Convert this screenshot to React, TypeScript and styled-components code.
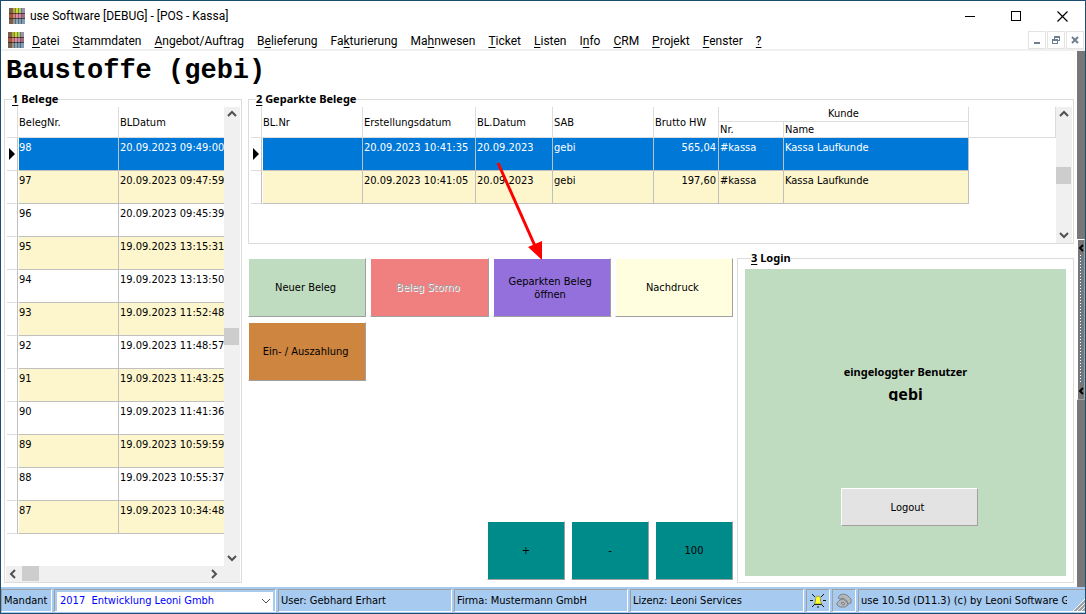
import React from 'react';
import styled, { createGlobalStyle, css } from 'styled-components';

const ui = '"DejaVu Sans Condensed", Tahoma, sans-serif';
const uiBold = '"Noto Sans", Tahoma, sans-serif';
const chrome = 'Roboto, "Segoe UI", sans-serif';
const line = '#dcdcdc';
const gridLine = '#c0c0c0';
const bevel = '#a0a0a0';

const GlobalStyle = createGlobalStyle`
  *, *::before, *::after { box-sizing: border-box; }
  body { margin: 0; background: #fff; color: #000; font: 11px/14px ${ui}; }
  button, select { font: inherit; color: inherit; margin: 0; }
`;

const Window = styled.div`
  position: relative;
  display: flex;
  flex-direction: column;
  min-height: 100vh;
  border: 1px solid #1d4e70;
  background: #fff;
`;

const TitleBar = styled.header`
  display: flex;
  align-items: center;
  height: 30px;
  padding-left: 8px;
  font: 12px/16px ${chrome};
`;

const Title = styled.h1`
  flex: 1;
  margin: 0 0 0 5px;
  font: inherit;
`;

const CaptionButton = styled.button`
  display: grid;
  place-items: center;
  width: 46px;
  height: 30px;
  padding: 0;
  border: 0;
  background: none;
`;

const MenuBar = styled.nav`
  display: flex;
  align-items: center;
  height: 20px;
  padding: 0 1px 0 7px;
  border-bottom: 2px solid #f0f0f0;
  font: 12px/16px ${chrome};
`;

const MenuList = styled.ul`
  display: flex;
  flex: 1;
  gap: 13px;
  margin: 0 0 0 8px;
  padding: 2px 0 0;
  list-style: none;
`;

const MenuLink = styled.a`
  color: inherit;
  text-decoration: none;
`;

const Key = styled.u`
  text-underline-offset: 2px;
`;

const MdiButtons = styled.div`
  display: flex;
  gap: 1px;
`;

const MdiButton = styled.button`
  display: grid;
  place-items: center;
  width: 18px;
  height: 18px;
  padding: 0;
  border: 1px solid #e3e3e3;
  background: #fff;
`;

const Main = styled.main`
  display: flex;
  flex: 1;
`;

const Workspace = styled.div`
  display: flex;
  flex: 1;
  flex-direction: column;
  min-width: 0;
  padding: 0 3px 4px;
`;

const Heading = styled.h2`
  margin: 0;
  height: 41px;
  padding-left: 2px;
  font: bold 27px/40px "Liberation Mono", "Courier New", monospace;
`;

const Columns = styled.div`
  display: grid;
  grid-template-columns: 238px minmax(0, 1fr);
  flex: 1;
  gap: 6px;
`;

const RightColumn = styled.div`
  display: flex;
  flex-direction: column;
  gap: 7px;
  min-width: 0;
`;

const Group = styled.fieldset<{ $pad: string }>`
  display: flex;
  min-width: 0;
  margin: 0;
  padding: ${(p) => p.$pad};
  border: 1px solid ${line};
`;

const Receipts = styled(Group)`
  flex-direction: column;
`;

const Login = styled(Group)`
  width: 337px;
`;

const Legend = styled.legend`
  margin-left: 6px;
  padding: 0;
  font: bold 11px/14px ${uiBold};
`;

const GridArea = styled.div<{ $height?: number }>`
  display: flex;
  flex: 1;
  min-width: 0;
  ${(p) => p.$height && css`height: ${p.$height}px;`}
`;

const GridView = styled.div`
  flex: 1;
  min-width: 0;
  padding-left: 1px;
  overflow: hidden;
`;

const Table = styled.table<{ $width: string }>`
  width: ${(p) => p.$width};
  table-layout: fixed;
  border-collapse: separate;
  border-spacing: 0;
  white-space: nowrap;
`;

const HeadCell = styled.th<{ $height?: number; $center?: boolean }>`
  height: ${(p) => p.$height ?? 31}px;
  padding: ${(p) => (p.$height ? 0 : 2)}px 1px 0;
  border-right: 1px solid ${line};
  border-bottom: 1px solid ${line};
  font-weight: normal;
  text-align: ${(p) => (p.$center ? 'center' : 'left')};
`;

const Row = styled.tr<{ $tone: 'selected' | 'odd' | 'even' }>`
  --fill: ${(p) => ({ selected: '#0078d7', odd: '#fdf5cc', even: '#fff' })[p.$tone]};
  color: ${(p) => (p.$tone === 'selected' ? '#fff' : '#000')};
`;

const Cell = styled.td<{ $right?: boolean }>`
  height: 33px;
  padding: 3px 2px 0 1px;
  border-right: 1px solid ${gridLine};
  border-bottom: 1px solid ${gridLine};
  background: var(--fill);
  text-align: ${(p) => (p.$right ? 'right' : 'left')};
  vertical-align: top;
`;

const KeyCell = styled(Cell)`
  padding-left: 0;
  border-left: 1px solid #fff;
`;

const MarkCell = styled.td`
  height: 33px;
  padding: 0 0 0 2px;
  border-right: 1px solid ${gridLine};
  border-bottom: 1px solid ${line};
`;

const MarkIcon = styled.svg`
  display: block;
`;

const Bar = styled.div<{ $dir: 'row' | 'column' }>`
  display: flex;
  flex: none;
  flex-direction: ${(p) => p.$dir};
  background: #f0f0f0;
  ${(p) => (p.$dir === 'row' ? css`height: 16px; padding-right: 18px;` : css`width: 16px;`)}
`;

const BarButton = styled.button`
  display: grid;
  place-items: center;
  width: 16px;
  height: 16px;
  padding: 0;
  border: 0;
  background: none;
`;

const Track = styled.div<{ $dir: 'row' | 'column' }>`
  display: flex;
  flex: 1;
  flex-direction: ${(p) => p.$dir};
  justify-content: ${(p) => (p.$dir === 'row' ? 'flex-start' : 'center')};
`;

const Thumb = styled.div<{ $dir: 'row' | 'column' }>`
  width: ${(p) => (p.$dir === 'row' ? 17 : 15)}px;
  height: ${(p) => (p.$dir === 'row' ? 15 : 17)}px;
  background: #cdcdcd;
`;

const Lower = styled.div`
  display: flex;
  flex: 1;
  gap: 4px;
`;

const Pad = styled.div`
  display: flex;
  flex: 1;
  flex-direction: column;
  justify-content: space-between;
  padding: 7px 0 3px;
`;

const Actions = styled.div`
  display: grid;
  grid-template-columns: repeat(4, 1fr);
  gap: 5px 4px;
`;

const Amounts = styled.div`
  display: flex;
  justify-content: flex-end;
  gap: 6px;
`;

const Tile = styled.button<{ $color: string }>`
  height: 59px;
  padding: 0 12px 0 9px;
  border: 1px solid;
  border-color: #fff ${bevel} ${bevel} #fff;
  background: ${(p) => p.$color};
  line-height: 13px;
  &:disabled { color: ${bevel}; text-shadow: 1px 1px #fff; }
`;

const AmountTile = styled(Tile)`
  width: 78px;
  padding: 0;
`;

const LoginCard = styled.div`
  display: flex;
  flex: 1;
  flex-direction: column;
  align-items: center;
  padding: 96px 0 50px;
  background: #c0dcc0;
`;

const LoginLabel = styled.p`
  margin: 0 0 6px;
  font: bold 11px/14px ${uiBold};
`;

const LoginUser = styled.p`
  margin: 0;
  height: 16px;
  overflow: hidden;
  font: bold 16px/18px ${uiBold};
`;

const LogoutButton = styled.button`
  width: 137px;
  height: 38px;
  margin: auto 0 0 8px;
  padding: 2px 4px 0 0;
  border: 1px solid;
  border-color: #fff ${bevel} ${bevel} #fff;
  background: #e3e3e3;
`;

const SideStrip = styled.aside`
  display: flex;
  flex: none;
  flex-direction: column;
  width: 8px;
  padding-top: 188px;
  background: #777;
`;

const Splitter = styled.button`
  display: flex;
  flex-direction: column;
  align-items: center;
  gap: 3px;
  height: 161px;
  padding: 4px 0;
  border: 1px solid;
  border-color: #fff ${bevel} ${bevel} #fff;
  background: #777;
`;

const Dots = styled.span`
  flex: 1;
  width: 3px;
  background:
    repeating-linear-gradient(#fff 0 1px, transparent 1px 3px) 0 0 / 1px 100% no-repeat,
    repeating-linear-gradient(transparent 0 1px, #2a78c8 1px 2px, transparent 2px 3px) 1px 0 / 1px 100% no-repeat;
`;

const StatusBar = styled.footer`
  display: grid;
  grid-template-columns: 51px 222px repeat(3, minmax(0, 174fr)) 24px 24px minmax(0, 227fr);
  gap: 2px;
  height: 26px;
  padding: 2px 0 1px;
  background: #a6caf0;
`;

const Status = styled.div`
  display: flex;
  align-items: center;
  min-width: 0;
  padding: 1px 0 0 2px;
  border: 1px solid;
  border-color: ${bevel} #fff #fff ${bevel};
  overflow: hidden;
  white-space: nowrap;
`;

const IconStatus = styled(Status)`
  justify-content: center;
  padding: 0;
`;

const VersionStatus = styled(Status)`
  position: relative;
  padding-right: 18px;
  border-right: 0;
`;

const Clip = styled.span`
  overflow: hidden;
`;

const Grip = styled.svg`
  position: absolute;
  right: 0;
  bottom: 0;
`;

const SelectFrame = styled.div`
  display: flex;
  align-items: center;
  width: 216px;
  height: 19px;
  padding-right: 2px;
  background: #fff;
`;

const ClientSelect = styled.select`
  flex: 1;
  height: 19px;
  padding: 0 3px;
  border: 0;
  appearance: none;
  background: transparent;
  color: #0000ff;
`;

const Pointer = styled.svg`
  position: absolute;
  top: 155px;
  left: 489px;
  pointer-events: none;
`;

const Logo = () => (
  <svg width="16" height="16" viewBox="0 0 16 16" shapeRendering="crispEdges" aria-hidden="true">
    <path fill="#7a6048" d="M0 0h3v16H0z" />
    <path fill="#b5a84a" d="M3 0h3v5H3z" />
    <path fill="#c9dc2c" d="M6 0h4v5H6z" />
    <path fill="#9ccf78" d="M10 0h3v5h-3z" />
    <path fill="#9d8fb0" d="M13 0h3v5h-3z" />
    <path fill="#a8553c" d="M0 5h3v5H0z" />
    <path fill="#d98068" d="M3 5h3v5H3z" />
    <path fill="#e08fa0" d="M6 5h4v5H6z" />
    <path fill="#d285b4" d="M10 5h3v5h-3z" />
    <path fill="#a07078" d="M13 5h3v5h-3z" />
    <path fill="#9c9488" d="M3 10h3v6H3z" />
    <path fill="#86a8b4" d="M6 10h4v6H6z" />
    <path fill="#7f9db8" d="M10 10h6v6h-6z" />
    <path stroke="#2a2020" strokeOpacity=".45" d="M3.500 0v16M6.500 0v16M9.500 0v16M12.500 0v16" />
    <path stroke="#2a2020" strokeOpacity=".7" d="M0 5.500h16M0 10.500h16" />
  </svg>
);

const arrows = {
  up: 'M1 6l4-4 4 4',
  down: 'M1 3l4 4 4-4',
  left: 'M6 1L2 5l4 4',
  right: 'M3 1l4 4-4 4',
};

const Chevron = ({ to, weight = 2 }: { to: keyof typeof arrows; weight?: number }) => (
  <svg width="10" height="10" viewBox="0 0 10 10" fill="none" stroke="#505050" strokeWidth={weight} aria-hidden="true">
    <path d={arrows[to]} />
  </svg>
);

const ScrollBar = ({ dir }: { dir: 'row' | 'column' }) => (
  <Bar $dir={dir}>
    <BarButton aria-label="Zurück"><Chevron to={dir === 'row' ? 'left' : 'up'} /></BarButton>
    <Track $dir={dir}><Thumb $dir={dir} /></Track>
    <BarButton aria-label="Weiter"><Chevron to={dir === 'row' ? 'right' : 'down'} /></BarButton>
  </Bar>
);

const Marker = () => (
  <MarkIcon width="6" height="12" viewBox="0 0 6 12" aria-hidden="true">
    <path d="M0 0l6 6-6 6z" />
  </MarkIcon>
);

const Mnemonic = ({ text }: { text: string }) => {
  const [before, key, after] = text.split('_');
  return <>{before}<Key>{key}</Key>{after}</>;
};

const menu = [
  '_D_atei', '_S_tammdaten', '_A_ngebot/Auftrag', 'B_e_lieferung', 'Fa_k_turierung', 'Ma_h_nwesen',
  '_T_icket', '_L_isten', 'I_n_fo', '_C_RM', '_P_rojekt', '_F_enster', '_?_',
];

const receipts = [
  ['98', '20.09.2023 09:49:00'],
  ['97', '20.09.2023 09:47:59'],
  ['96', '20.09.2023 09:45:39'],
  ['95', '19.09.2023 13:15:31'],
  ['94', '19.09.2023 13:13:50'],
  ['93', '19.09.2023 11:52:48'],
  ['92', '19.09.2023 11:48:57'],
  ['91', '19.09.2023 11:43:25'],
  ['90', '19.09.2023 11:41:36'],
  ['89', '19.09.2023 10:59:59'],
  ['88', '19.09.2023 10:55:37'],
  ['87', '19.09.2023 10:34:48'],
];

const parked = [
  ['20.09.2023 10:41:35', '20.09.2023', 'gebi', '565,04', '#kassa', 'Kassa Laufkunde'],
  ['20.09.2023 10:41:05', '20.09.2023', 'gebi', '197,60', '#kassa', 'Kassa Laufkunde'],
];

const tone = (i: number) => (i === 0 ? 'selected' : i % 2 ? 'odd' : 'even');

export default function App() {
  return (
    <Window>
      <GlobalStyle />
      <TitleBar>
        <Logo />
        <Title>use Software [DEBUG] - [POS - Kassa]</Title>
        <CaptionButton aria-label="Minimieren">
          <svg width="11" height="11" shapeRendering="crispEdges"><path stroke="#000" d="M0 5.500h10" /></svg>
        </CaptionButton>
        <CaptionButton aria-label="Maximieren">
          <svg width="11" height="11" shapeRendering="crispEdges"><path fill="none" stroke="#000" d="M.5.500h9v9h-9z" /></svg>
        </CaptionButton>
        <CaptionButton aria-label="Schließen">
          <svg width="11" height="11"><path stroke="#000" strokeWidth="1.200" d="M.5.500l10 10M10.500.500l-10 10" /></svg>
        </CaptionButton>
      </TitleBar>

      <MenuBar>
        <Logo />
        <MenuList>
          {menu.map((m) => (
            <li key={m}><MenuLink href="#"><Mnemonic text={m} /></MenuLink></li>
          ))}
        </MenuList>
        <MdiButtons>
          <MdiButton aria-label="Fenster minimieren">
            <svg width="8" height="8"><path fill="#6f7f90" d="M1 6h6v2H1z" /></svg>
          </MdiButton>
          <MdiButton aria-label="Fenster wiederherstellen">
            <svg width="8" height="8" fill="#6f7f90" shapeRendering="crispEdges">
              <path d="M2 0h6v5H6V4h1V2H3v1H2zM0 3h6v5H0zM1 5v2h4V5z" fillRule="evenodd" />
            </svg>
          </MdiButton>
          <MdiButton aria-label="Fenster schließen">
            <svg width="8" height="8"><path stroke="#6f7f90" strokeWidth="2" d="M1 1l6 6M7 1L1 7" /></svg>
          </MdiButton>
        </MdiButtons>
      </MenuBar>

      <Main>
        <Workspace>
          <Heading>Baustoffe (gebi)</Heading>
          <Columns>
            <Receipts $pad="1px 1px 0">
              <Legend><Key>1</Key> Belege</Legend>
              <GridArea>
                <GridView>
                  <Table $width="226px">
                    <colgroup><col width="11" /><col width="101" /><col /></colgroup>
                    <thead>
                      <tr>
                        <HeadCell />
                        <HeadCell>BelegNr.</HeadCell>
                        <HeadCell>BLDatum</HeadCell>
                      </tr>
                    </thead>
                    <tbody>
                      {receipts.map(([nr, date], i) => (
                        <Row key={nr} $tone={tone(i)}>
                          <MarkCell>{i === 0 && <Marker />}</MarkCell>
                          <KeyCell>{nr}</KeyCell>
                          <Cell>{date}</Cell>
                        </Row>
                      ))}
                    </tbody>
                  </Table>
                </GridView>
                <ScrollBar dir="column" />
              </GridArea>
              <ScrollBar dir="row" />
            </Receipts>

            <RightColumn>
              <Group $pad="1px 1px 0">
                <Legend><Key>2</Key> Geparkte Belege</Legend>
                <GridArea $height={136}>
                  <GridView>
                    <Table $width="100%">
                      <colgroup>
                        <col width="11" /><col width="101" /><col width="113" /><col width="77" />
                        <col width="101" /><col width="65" /><col width="65" /><col width="185" /><col />
                      </colgroup>
                      <thead>
                        <tr>
                          <HeadCell rowSpan={2} />
                          <HeadCell rowSpan={2}>BL.Nr</HeadCell>
                          <HeadCell rowSpan={2}>Erstellungsdatum</HeadCell>
                          <HeadCell rowSpan={2}>BL.Datum</HeadCell>
                          <HeadCell rowSpan={2}>SAB</HeadCell>
                          <HeadCell rowSpan={2}>Brutto HW</HeadCell>
                          <HeadCell colSpan={2} $height={15} $center>Kunde</HeadCell>
                          <HeadCell rowSpan={2} />
                        </tr>
                        <tr>
                          <HeadCell $height={16}>Nr.</HeadCell>
                          <HeadCell $height={16}>Name</HeadCell>
                        </tr>
                      </thead>
                      <tbody>
                        {parked.map(([created, date, sab, gross, nr, name], i) => (
                          <Row key={created} $tone={tone(i)}>
                            <MarkCell>{i === 0 && <Marker />}</MarkCell>
                            <KeyCell />
                            <Cell>{created}</Cell>
                            <Cell>{date}</Cell>
                            <Cell>{sab}</Cell>
                            <Cell $right>{gross}</Cell>
                            <Cell>{nr}</Cell>
                            <Cell>{name}</Cell>
                          </Row>
                        ))}
                      </tbody>
                    </Table>
                  </GridView>
                  <ScrollBar dir="column" />
                </GridArea>
              </Group>

              <Lower>
                <Pad>
                  <Actions>
                    <Tile $color="#c0dcc0">Neuer Beleg</Tile>
                    <Tile $color="#f08080" disabled>Beleg Storno</Tile>
                    <Tile $color="#9370db">Geparkten Beleg öffnen</Tile>
                    <Tile $color="#ffffe0">Nachdruck</Tile>
                    <Tile $color="#cd853f">Ein- / Auszahlung</Tile>
                  </Actions>
                  <Amounts>
                    <AmountTile $color="#008b8b">+</AmountTile>
                    <AmountTile $color="#008b8b">-</AmountTile>
                    <AmountTile $color="#008b8b">100</AmountTile>
                  </Amounts>
                </Pad>
                <Login $pad="4px 7px 6px">
                  <Legend><Key>3</Key> Login</Legend>
                  <LoginCard>
                    <LoginLabel>eingeloggter Benutzer</LoginLabel>
                    <LoginUser>gebi</LoginUser>
                    <LogoutButton>Logout</LogoutButton>
                  </LoginCard>
                </Login>
              </Lower>
            </RightColumn>
          </Columns>
        </Workspace>
        <SideStrip>
          <Splitter aria-label="Seitenleiste öffnen">
            <svg width="6" height="8" fill="none" stroke="#000" strokeWidth="2"><path d="M5 1L2 4l3 3" /></svg>
            <Dots />
            <svg width="6" height="8" fill="none" stroke="#000" strokeWidth="2"><path d="M5 1L2 4l3 3" /></svg>
          </Splitter>
        </SideStrip>
      </Main>

      <StatusBar>
        <Status as="label" htmlFor="client">Mandant</Status>
        <Status>
          <SelectFrame>
            <ClientSelect id="client" defaultValue="2017">
              <option value="2017">{'2017\u00a0 Entwicklung Leoni Gmbh'}</option>
            </ClientSelect>
            <Chevron to="down" weight={1} />
          </SelectFrame>
        </Status>
        <Status>User: Gebhard Erhart</Status>
        <Status>Firma: Mustermann GmbH</Status>
        <Status>Lizenz: Leoni Services</Status>
        <IconStatus>
          <svg width="16" height="16" viewBox="0 0 16 16" role="img" aria-label="Alarm">
            <path stroke="#111" d="M2 1l3 3M14 1l-3 3M0 7.500h3M13 7.500h3M2 14l2-2M14 14l-2-2M8 13v2" />
            <path fill="#ffff30" stroke="#8a8a20" strokeWidth=".8" d="M8 3C6.500 3 5.500 4.500 5.500 7c0 2-.5 3-1.500 4h8c-1-1-1.500-2-1.500-4 0-2.500-1-4-2.500-4z" />
            <path stroke="#222" d="M4 11.500h8" />
          </svg>
        </IconStatus>
        <IconStatus>
          <svg width="16" height="16" viewBox="0 0 16 16" fill="#b4b8bc" stroke="#808488" role="img" aria-label="Telefon">
            <path d="M1 12l0-2 3-3 3-1 4 3 1 3-3 2-5 0z" />
            <path d="M2 5l2-3 3-1 4 1 4 4 0 4-3 1-1-3-4-3-3 1z" />
            <path fill="none" d="M5 10l2-1 2 2-2 1z" />
          </svg>
        </IconStatus>
        <VersionStatus>
          <Clip>use 10.5d (D11.3) (c) by Leoni Software GmbH</Clip>
          <Grip width="12" height="12" viewBox="0 0 12 12" aria-hidden="true">
            <path stroke="#fff" d="M0 12L12 0M4 12l8-8M8 12l4-4" />
            <path stroke="#a0a0a0" strokeWidth="2" d="M1.500 12.500l11-11M5.500 12.500l7-7M9.500 12.500l3-3" />
          </Grip>
        </VersionStatus>
      </StatusBar>

      <Pointer width="60" height="106" viewBox="0 0 60 106" aria-hidden="true">
        <path stroke="#f00" strokeWidth="3" d="M8 7l37 83" />
        <path fill="#f00" d="M52 104L38 91l14-6z" />
      </Pointer>
    </Window>
  );
}
